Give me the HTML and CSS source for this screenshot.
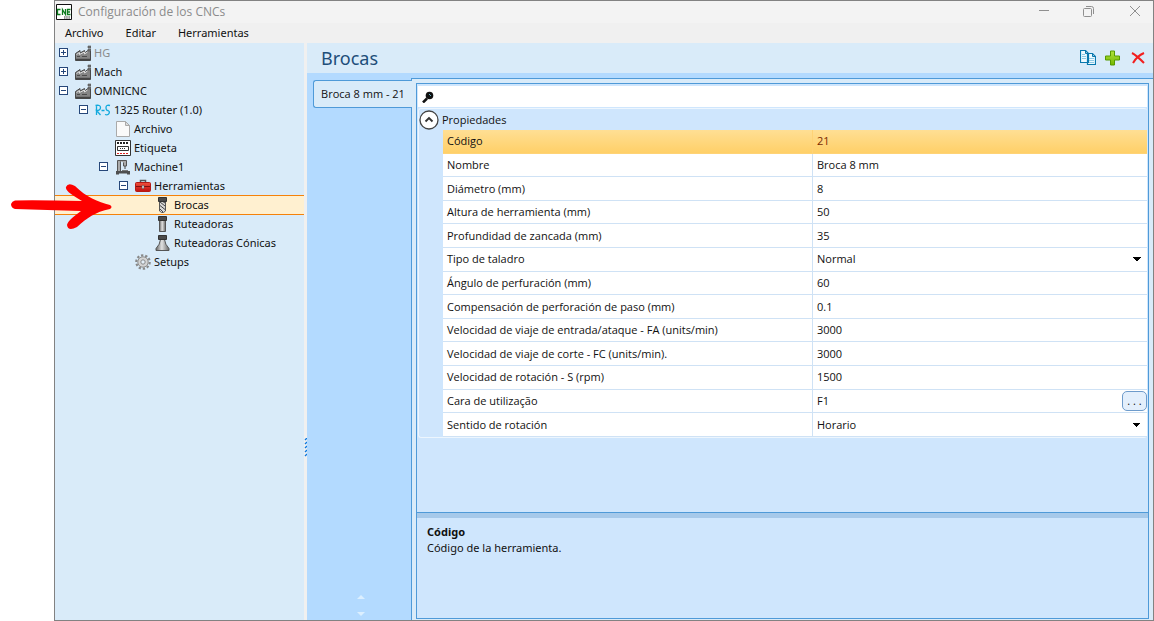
FILE: index.html
```html
<!DOCTYPE html>
<html lang="es">
<head>
<meta charset="utf-8">
<title>Configuración de los CNCs</title>
<link rel="stylesheet" href="styles.css">
</head>
<body>
<svg class="defs" aria-hidden="true">
  <defs>
    <linearGradient id="steel" x1="0" x2="1" y1="0" y2="0"><stop offset="0" stop-color="#666"/><stop offset=".45" stop-color="#e2e2e2"/><stop offset="1" stop-color="#666"/></linearGradient>
    <linearGradient id="leaf" x1="0" x2="0" y1="0" y2="1"><stop offset="0" stop-color="#b0e23c"/><stop offset="1" stop-color="#74b800"/></linearGradient>
    <linearGradient id="box" x1="0" x2="0" y1="0" y2="1"><stop offset="0" stop-color="#f0503c"/><stop offset="1" stop-color="#c01010"/></linearGradient>
    <symbol id="factory" viewBox="0 0 16 16">
      <path d="M.5 15.500V8.500L5 5.500V8L9.500 5.500V8L13 5.500h2.500v10z" fill="#858585" stroke="#484848"/>
      <path d="M1.500 9.500l3-2v2l5-2.500v2l3-2" fill="none" stroke="#dedede"/>
      <path d="M2 11.500h3M7 11.500h5" stroke="#4c4c4c"/><path d="M1 14.500h14" stroke="#444" stroke-width="1.500"/>
      <path d="M13 1h3v2h-3zM13 4h3v2h-3z" fill="#777" stroke="#505050" stroke-width=".6"/>
    </symbol>
    <symbol id="page" viewBox="0 0 16 16"><path d="M1.500.5h9l4 4v11h-13z" fill="#fafafa" stroke="#aaa"/><path d="M10.500.5v4h4z" fill="#ddd" stroke="#aaa"/></symbol>
    <symbol id="label" viewBox="0 0 16 16"><path d="M.5.5h15v15H.5z" fill="#fff" stroke="#333"/><path d="M2 3h12" stroke="#222" stroke-width="2" stroke-dasharray="2 1"/><path d="M2.500 6.500h11v4h-11z" fill="none" stroke="#333"/><path d="M5 8.500h6" stroke="#333" stroke-dasharray="1 1"/><path d="M2 13.500h12" stroke="#d22" stroke-dasharray="2 1"/></symbol>
    <symbol id="machine" viewBox="0 0 16 16">
      <path d="M2.500 1.500h3v11h-3z" fill="#aaa" stroke="#555"/>
      <path d="M3 1.500h8.500V7h-3V3.500" fill="#aaa" stroke="#555"/>
      <path d="M10 7v3" stroke="#444"/><path d="M7 11.500h6" stroke="#777"/>
      <path d="M1 12h14v3.500h-3V14.500H4v1H1z" fill="#4f4f4f"/>
    </symbol>
    <symbol id="toolbox" viewBox="0 0 16 16"><path d="M5.500 5V2.500h5V5" fill="none" stroke="#555" stroke-width="1.500"/><path d="M.5 5.500q0-1 1-1h13q1 0 1 1v7q0 1-1 1h-13q-1 0-1-1z" fill="url(#box)" stroke="#b51a14"/><path d="M1 8.500h14" stroke="#831010"/><path d="M7 7.500h2v3H7z" fill="#ddd" stroke="#555" stroke-width=".5"/></symbol>
    <symbol id="drill" viewBox="0 0 16 16"><path d="M4.500 4h6v10l-2 1.500h-2l-2-1.500z" fill="#d8d8d8" stroke="#555"/><path d="M5 5l5 4M5 8.500l5 4M5 12l3 3M7 4l3 2" stroke="#444"/><path d="M3.500.5h8v4h-8z" fill="#4a4a4a" stroke="#333"/></symbol>
    <symbol id="mill" viewBox="0 0 16 16"><path d="M4.500 4.500h6v11h-6z" fill="url(#steel)" stroke="#555"/><path d="M3.500.5h8v4h-8z" fill="#4a4a4a" stroke="#333"/></symbol>
    <symbol id="cone" viewBox="0 0 16 16"><path d="M5.500 4.500h4q.5 5 4.500 9v2H1v-2q4-4 4.500-9z" fill="url(#steel)" stroke="#555"/><path d="M3.500.5h8v4h-8z" fill="#4a4a4a" stroke="#333"/></symbol>
    <symbol id="gear" viewBox="0 0 16 16"><circle cx="8" cy="8" r="6.700" fill="none" stroke="#888" stroke-width="2.200" stroke-dasharray="2.300 1.900"/><circle cx="8" cy="8" r="5.200" fill="#d4d4d4" stroke="#8e8e8e"/><circle cx="8" cy="8" r="2.200" fill="#e4eff8" stroke="#888"/></symbol>
  </defs>
</svg>

<div class="window">
  <header class="titlebar">
    <svg class="icon" viewBox="0 0 16 16"><path d="M.5.5h15v15H.5z" fill="#fff" stroke="#111"/><path d="M4.500 5.500h-3v5h3M6.500 11V5.500l3 5V5M14.500 5.500h-3v5h3M12 8h2" fill="none" stroke="#0b7a1c" stroke-width="1.300"/><path d="M8 13.500h6" stroke="#999" stroke-width="3" stroke-dasharray="1.500 .7"/></svg>
    <h1 class="caption">Configuración de los CNCs</h1>
    <div class="window-buttons">
      <button aria-label="Minimizar"><svg viewBox="0 0 12 12"><path d="M1 5.500h10"/></svg></button>
      <button aria-label="Restaurar"><svg viewBox="0 0 12 12"><path d="M1.500 3.500h6q1 0 1 1v6q0 1-1 1h-6q-1 0-1-1v-6q0-1 1-1zM3 1.500h5.500q2 0 2 2V9"/></svg></button>
      <button aria-label="Cerrar"><svg viewBox="0 0 12 12"><path d="M1 1l10 10M11 1L1 11"/></svg></button>
    </div>
  </header>
  <nav class="menubar">
    <button>Archivo</button><button>Editar</button><button>Herramientas</button>
  </nav>

  <div class="workspace">
    <nav class="tree" aria-label="Máquinas">
      <ul>
        <li><div class="node level-0 muted"><button class="expander closed" aria-label="Expandir"></button><svg class="icon"><use href="#factory"/></svg><span>HG</span></div></li>
        <li><div class="node level-0"><button class="expander closed" aria-label="Expandir"></button><svg class="icon"><use href="#factory"/></svg><span>Mach</span></div></li>
        <li><div class="node level-0"><button class="expander" aria-label="Contraer"></button><svg class="icon"><use href="#factory"/></svg><span>OMNICNC</span></div>
          <ul>
            <li><div class="node level-1"><button class="expander" aria-label="Contraer"></button><svg class="icon" viewBox="0 0 16 16"><path d="M1.500 13V4M.5 3.500q5-1 5 2t-4 3l4 4.500M6.500 8.500h3M15 3.500q-4-1-4 2t2 3q2 1 1 3t-4 1" fill="none" stroke="#12a9dd" stroke-width="1.300"/></svg><span>1325 Router (1.0)</span></div>
              <ul>
                <li><div class="node level-2"><svg class="icon"><use href="#page"/></svg><span>Archivo</span></div></li>
                <li><div class="node level-2"><svg class="icon"><use href="#label"/></svg><span>Etiqueta</span></div></li>
                <li><div class="node level-2"><button class="expander" aria-label="Contraer"></button><svg class="icon"><use href="#machine"/></svg><span>Machine1</span></div>
                  <ul>
                    <li><div class="node level-3"><button class="expander" aria-label="Contraer"></button><svg class="icon"><use href="#toolbox"/></svg><span>Herramientas</span></div>
                      <ul>
                        <li><div class="node level-4 selected"><svg class="icon"><use href="#drill"/></svg><span>Brocas</span></div></li>
                        <li><div class="node level-4"><svg class="icon"><use href="#mill"/></svg><span>Ruteadoras</span></div></li>
                        <li><div class="node level-4"><svg class="icon"><use href="#cone"/></svg><span>Ruteadoras Cónicas</span></div></li>
                      </ul>
                    </li>
                    <li><div class="node level-3"><svg class="icon"><use href="#gear"/></svg><span>Setups</span></div></li>
                  </ul>
                </li>
              </ul>
            </li>
          </ul>
        </li>
      </ul>
    </nav>
    <div class="splitter"><svg viewBox="0 0 3 20"><path d="M1 2l2-2M1 6l2-2M1 10l2-2M1 14l2-2M1 18l2-2" stroke="#0a78e0" stroke-width="1.300"/></svg></div>

    <main class="editor">
      <div class="editor-head">
        <h2>Brocas</h2>
        <div class="tools">
          <button aria-label="Copiar"><svg viewBox="0 0 16 16"><path d="M.5.5h5l3 3v9h-8zM7.500 3.500h5l3 3v8h-8z" fill="#eefaff" stroke="#0878ae" stroke-width="1.200"/><path d="M5.500.5v3h3M12.500 3.500v3h3" fill="none" stroke="#0878ae"/><path d="M2 4.500h3M2 6.500h4M2 8.500h4M9 8.500h5M9 10.500h5M9 12.500h5" stroke="#8cc9e4"/></svg></button>
          <button aria-label="Agregar"><svg viewBox="0 0 16 16"><path d="M5.500 1h4v5h5v4h-5v5h-4v-5h-5V6h5z" fill="url(#leaf)" stroke="#579a00"/></svg></button>
          <button aria-label="Eliminar"><svg viewBox="0 0 16 16"><path d="M2 3q4 2 12 10M14 3Q7 6 3 13" fill="none" stroke="#f22020" stroke-width="2"/></svg></button>
        </div>
      </div>
      <div class="tabs">
        <div class="tab-strip">
          <button class="tab">Broca 8 mm - 21</button>
          <div class="scrollers"><button class="up" aria-label="Subir"></button><button class="down" aria-label="Bajar"></button></div>
        </div>
        <section class="tab-page">
          <div class="grid-box">
            <label class="search"><svg viewBox="0 0 12 12"><path d="M1 11.500l4-4" stroke="#111" stroke-width="2.500"/><circle cx="7.500" cy="4.500" r="3.800" fill="#111"/><path d="M7 3l2 2" stroke="#62b4c4"/></svg><input type="text" aria-label="Buscar"></label>
            <div class="group">
              <button class="group-head"><svg viewBox="0 0 20 20"><circle cx="10" cy="10" r="9" fill="#fff" stroke="#444" stroke-width="1.300"/><path d="M6.500 11.500L10 8l3.500 3.500" fill="none" stroke="#333" stroke-width="1.900"/></svg>Propiedades</button>
              <table class="props">
                <tr class="current"><th scope="row">Código</th><td>21</td></tr>
                <tr><th scope="row">Nombre</th><td>Broca 8 mm</td></tr>
                <tr><th scope="row">Diámetro (mm)</th><td>8</td></tr>
                <tr><th scope="row">Altura de herramienta (mm)</th><td>50</td></tr>
                <tr><th scope="row">Profundidad de zancada (mm)</th><td>35</td></tr>
                <tr><th scope="row"><label for="tipo">Tipo de taladro</label></th><td><select id="tipo"><option>Normal</option></select></td></tr>
                <tr><th scope="row">Ángulo de perfuración (mm)</th><td>60</td></tr>
                <tr><th scope="row">Compensación de perforación de paso (mm)</th><td>0.1</td></tr>
                <tr><th scope="row">Velocidad de viaje de entrada/ataque - FA (units/min)</th><td>3000</td></tr>
                <tr><th scope="row">Velocidad de viaje de corte - FC (units/min).</th><td>3000</td></tr>
                <tr><th scope="row">Velocidad de rotación - S (rpm)</th><td>1500</td></tr>
                <tr><th scope="row">Cara de utilização</th><td><div class="with-button">F1<button class="more" aria-label="Elegir cara">. . .</button></div></td></tr>
                <tr><th scope="row"><label for="sentido">Sentido de rotación</label></th><td><select id="sentido"><option>Horario</option></select></td></tr>
              </table>
            </div>
            <div class="help"><h3>Código</h3><p>Código de la herramienta.</p></div>
          </div>
        </section>
      </div>
    </main>
  </div>
</div>
<svg class="pointer" viewBox="0 0 102 48" aria-hidden="true"><path d="M4 17.500Q26 17 71 18C63 13 54 8 55 4Q57-1 64 3C75 14 87 19 99 22Q102 24 99 26C84 29 76 35 66 44Q57 49 56 42C57 37 64 33 70 28Q36 27 4 26Q0 25 0 21Q1 18 4 17.500z" fill="#fe0000"/></svg>
</body>
</html>
```
FILE: styles.css
```css
* { box-sizing: border-box; }
body {
  margin: 0;
  height: 100vh;
  padding: 0 0 0 54px;
  background: #fff;
  color: #111;
  font: 11px/16px "Noto Sans", "Open Sans", sans-serif;
}
h1, h2, h3, p, ul { margin: 0; padding: 0; font-weight: normal; }
ul { list-style: none; }
button, input, select { font: inherit; color: inherit; padding: 0; border: 0; background: none; }
svg { display: block; }
.defs { position: absolute; width: 0; height: 0; }

.window {
  height: 100%;
  display: flex;
  flex-direction: column;
  border: 1px solid #828282;
}
.titlebar {
  display: flex;
  align-items: center;
  height: 22px;
  padding-left: 1px;
  background: #f3f3f3;
}
.icon { width: 16px; height: 16px; flex: none; overflow: visible; }
.caption { margin-left: 6px; font: 12px/16px "Open Sans", "Noto Sans", sans-serif; color: #8b8b8b; }
.window-buttons { display: flex; align-self: flex-start; margin-left: auto; }
.window-buttons button { width: 45px; height: 19px; display: grid; place-items: center; }
.window-buttons button:last-child { width: 36px; margin-left: 6px; }
.window-buttons svg { width: 12px; height: 12px; fill: none; stroke: #8f8f8f; }
.menubar {
  display: flex;
  gap: 22px;
  height: 20px;
  padding-left: 10px;
  background: #f0f0f0;
}

.workspace { flex: 1; min-height: 0; display: flex; }
.tree { width: 249px; flex: none; background: #d9ebf9; }
.node { display: flex; align-items: center; height: 19px; gap: 3px; padding-left: 20px; }
.node.level-1 { padding-left: 40px; }
.node.level-2 { padding-left: 60px; }
.node.level-3 { padding-left: 80px; }
.node.level-4 { padding-left: 100px; }
.muted { color: #8a8a8a; }
.selected { background: #fff0d0; outline: 0; box-shadow: inset 0 1px #f5820a, 0 1px #f5820a; }
.expander {
  width: 9px;
  height: 9px;
  margin: 0 4px 0 -16px;
  flex: none;
  border: 1px solid #26477a;
  background: linear-gradient(#26477a, #26477a) center / 5px 1px no-repeat #fff;
}
.expander.closed {
  background: linear-gradient(#26477a, #26477a) center / 5px 1px no-repeat,
    linear-gradient(#26477a, #26477a) center / 1px 5px no-repeat #fff;
}
.splitter { width: 3px; flex: none; display: flex; align-items: center; background: #f0f0f0; padding-top: 232px; }
.splitter svg { width: 3px; height: 20px; }

.editor { flex: 1; min-width: 0; display: flex; flex-direction: column; background: #b3daff; }
.editor-head {
  display: flex;
  align-items: center;
  justify-content: space-between;
  height: 30px;
  padding: 0 7px 0 14px;
  background: #d9ebf9;
}
.editor-head h2 { font-size: 18px; line-height: 24px; color: #1e4e79; }
.tools { display: flex; gap: 9px; }
.tools svg { width: 16px; height: 16px; }
.tabs { flex: 1; min-height: 0; display: flex; padding-top: 5px; }
.tab-strip { width: 104px; flex: none; display: flex; flex-direction: column; align-items: flex-end; padding-top: 2px; }
.tab {
  z-index: 1;
  width: 99px;
  height: 28px;
  margin-right: -1px;
  border: 1px solid #4f9ad8;
  border-right: 0;
  border-radius: 3px 0 0 3px;
  background: #d9ebf9;
}
.tab, .group, .props { font-family: "Open Sans", "Noto Sans", sans-serif; }
.scrollers { display: grid; gap: 13px; margin: auto 46px 4px 0; }
.scrollers button { width: 0; height: 0; border: 4px solid transparent; }
.scrollers .up { border-bottom-color: #dcefff; border-top: 0; }
.scrollers .down { border-top-color: #dcefff; border-bottom: 0; }
.tab-page {
  flex: 1;
  min-width: 0;
  padding: 4px 4px 1px;
  border: solid #4f9ad8;
  border-width: 1px 0 0 1px;
  background: #d9ebf9;
}
.grid-box { height: 100%; display: flex; flex-direction: column; border: 1px solid #4f9ad8; background: #cfe6fd; }
.search {
  display: flex;
  align-items: center;
  height: 21px;
  margin: 2px 1px 1px;
  padding-left: 4px;
  background: #fff;
}
.search svg { width: 12px; height: 12px; }
.search input { flex: 1; outline: 0; }
.group {
  margin: 0 1px;
  border: solid #edf6fe;
  border-width: 1px 0 1px 1px;
  border-radius: 3px;
}
.group-head { display: flex; align-items: center; gap: 3px; height: 21px; }
.group-head svg { width: 20px; height: 20px; }
.props {
  width: calc(100% - 24px);
  height: 307px;
  margin-left: 24px;
  border-spacing: 0;
  table-layout: fixed;
  background: #fff;
}
.props th, .props td { padding: 0 0 0 4px; border-bottom: 1px solid #cfe2f5; text-align: left; font-weight: normal; }
.props th { width: 370px; border-right: 1px solid #cfe2f5; }
.current { background: linear-gradient(#ffdf94, #ffcf66); }
.current th, .current td { border-color: #ffd376; }
.current td { color: #7a2a00; }
.props select {
  display: block;
  width: 100%;
  height: 16px;
  appearance: none;
  background: linear-gradient(45deg, transparent 50%, #000 50%) right 10px center / 4px 4px no-repeat,
    linear-gradient(-45deg, transparent 50%, #000 50%) right 6px center / 4px 4px no-repeat;
}
.with-button { display: flex; align-items: center; justify-content: space-between; height: 16px; }
.more {
  width: 25px;
  height: 20px;
  flex: none;
  border: 1px solid #6e9bcb;
  border-radius: 5px;
  background: #e3effc;
}
.help { flex: 0 0 106px; margin-top: auto; padding: 11px 10px; border-top: 1px solid #4f9ad8; box-shadow: inset 0 5px #a6c9ea; }
.help h3 { font-size: 11px; font-weight: bold; }

.pointer { position: absolute; left: 11px; top: 183px; width: 102px; height: 48px; }
```
